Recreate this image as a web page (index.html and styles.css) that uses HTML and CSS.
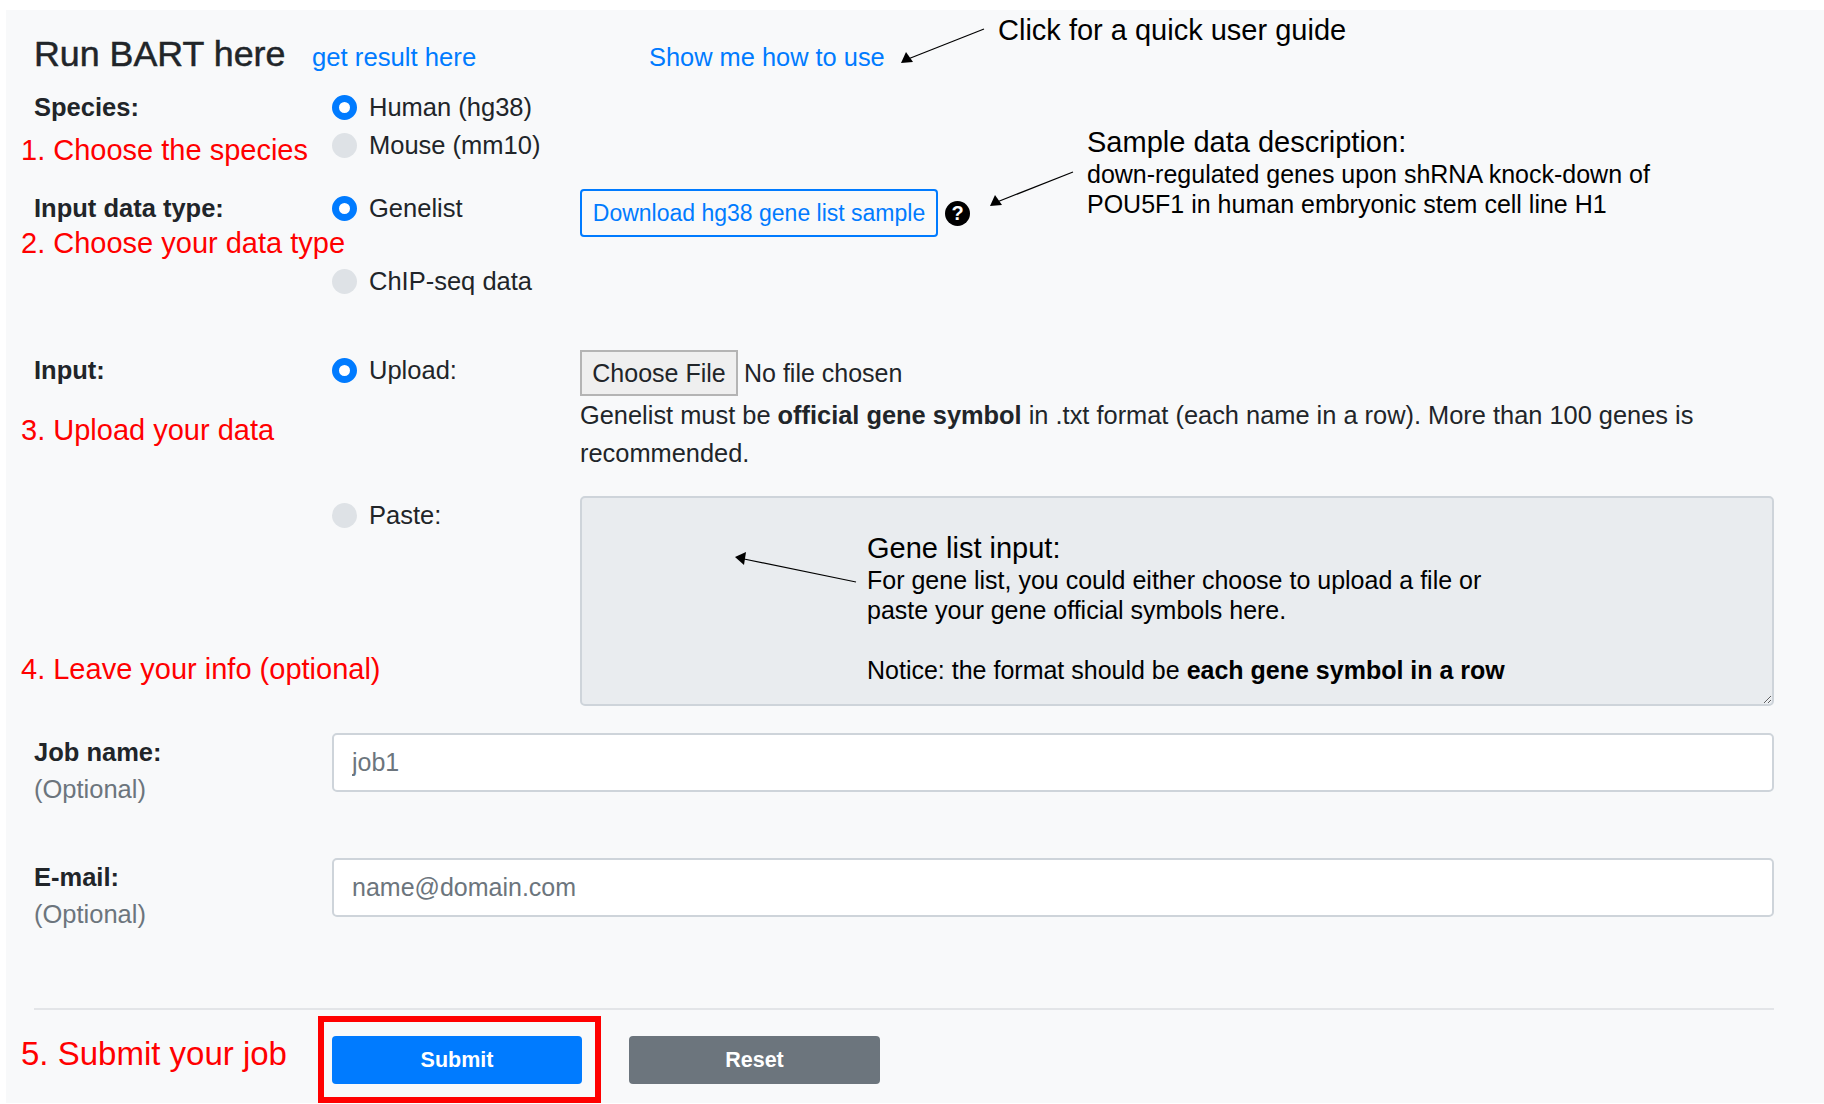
FILE: index.html
```html
<!DOCTYPE html>
<html lang="en">
<head>
    <meta charset="UTF-8">
    <meta name="viewport" content="width=device-width, initial-scale=1.0">
    <title>Run BART here</title>
    <link rel="stylesheet" href="styles.css">
</head>
<body>
    <div class="page">
        <form class="panel">

            <!-- Header -->
            <div class="header">
                <h3>Run BART here</h3>
                <a href="#" class="result-link">get result here</a>
                <a href="#" class="guide-link">Show me how to use</a>
            </div>

            <!-- Species -->
            <div class="row species-row">
                <div class="row-label"><b>Species:</b></div>
                <div class="row-options">
                    <label class="option"><input type="radio" name="species" checked>Human (hg38)</label>
                    <label class="option"><input type="radio" name="species">Mouse (mm10)</label>
                </div>
            </div>

            <!-- Data type -->
            <div class="row type-row">
                <div class="row-label"><b>Input data type:</b></div>
                <div class="row-options">
                    <label class="option"><input type="radio" name="datatype" checked>Genelist</label>
                    <label class="option chip-option"><input type="radio" name="datatype">ChIP-seq data</label>
                </div>
                <div class="row-extra sample-box">
                    <a href="#" class="btn-sample">Download hg38 gene list sample</a>
                    <span class="help-icon">?</span>
                </div>
            </div>

            <!-- Input -->
            <div class="row input-row">
                <div class="row-label"><b>Input:</b></div>
                <div class="row-options">
                    <label class="option"><input type="radio" name="source" checked>Upload:</label>
                </div>
                <div class="row-extra">
                    <div class="file-picker">
                        <button type="button" class="file-btn">Choose File</button>
                        <span>No file chosen</span>
                    </div>
                    <p class="file-hint">Genelist must be <b>official gene symbol</b> in .txt format (each name in a row). More than 100 genes is recommended.</p>
                </div>
            </div>
            <div class="row paste-row">
                <div class="row-label"></div>
                <div class="row-options">
                    <label class="option"><input type="radio" name="source">Paste:</label>
                </div>
                <div class="row-extra">
                    <textarea class="gene-text" disabled></textarea>
                </div>
            </div>

            <!-- Job info -->
            <div class="row job-row">
                <div class="row-label"><b>Job name:</b><div class="muted">(Optional)</div></div>
                <div class="row-field"><input type="text" class="text-field" placeholder="job1"></div>
            </div>
            <div class="row mail-row">
                <div class="row-label"><b>E-mail:</b><div class="muted">(Optional)</div></div>
                <div class="row-field"><input type="text" class="text-field" placeholder="name@domain.com"></div>
            </div>

            <hr>

            <!-- Buttons -->
            <div class="actions">
                <button type="button" class="btn btn-submit">Submit</button>
                <button type="button" class="btn btn-reset">Reset</button>
            </div>
        </form>

        <!-- Notes drawn on top of the form -->
        <div class="step step-1">1. Choose the species</div>
        <div class="step step-2">2. Choose your data type</div>
        <div class="step step-3">3. Upload your data</div>
        <div class="step step-4">4. Leave your info (optional)</div>
        <div class="step step-5">5. Submit your job</div>
        <div class="submit-frame"></div>

        <div class="note note-guide">Click for a quick user guide</div>
        <div class="note note-sample">
            <div class="note-title">Sample data description:</div>
            down-regulated genes upon shRNA knock-down of<br>
            POU5F1 in human embryonic stem cell line H1
        </div>
        <div class="note note-gene">
            <div class="note-title">Gene list input:</div>
            For gene list, you could either choose to upload a file or<br>
            paste your gene official symbols here.<br>
            <br>
            Notice: the format should be <b>each gene symbol in a row</b>
        </div>

        <svg class="arrows" width="1824" height="1104" viewBox="0 0 1824 1104">
            <g stroke="#000" stroke-width="1.2">
                <line x1="984" y1="29" x2="908" y2="59"/>
                <line x1="1073" y1="172" x2="997" y2="202"/>
                <line x1="856" y1="582" x2="744" y2="559"/>
            </g>
            <polygon points="901,63 906,52 913,62"/>
            <polygon points="990,206 995,195 1002,205"/>
            <polygon points="735,557 746,552 744,565"/>
        </svg>
    </div>
</body>
</html>
```

FILE: styles.css
```css
* {
    box-sizing: border-box;
}
body {
    margin: 0;
    background-color: #fff;
    font-family: "Liberation Sans", Arial, sans-serif;
    font-size: 25.5px;
    line-height: 37px;
    color: #212529;
}
.page {
    position: relative;
    width: 1824px;
    height: 1104px;
    overflow: hidden;
    padding: 10px 0 0 6px;
}
.panel {
    height: 1093px;
    padding: 0 50px 0 28px;
    background-color: #f8f9fa;
}

/* header */
.header {
    display: flex;
    align-items: baseline;
    height: 78px;
    padding-top: 23px;
}
.header h3 {
    margin: 0;
    width: 278px;
    font-size: 35.8px;
    font-weight: normal;
    line-height: 42px;
    -webkit-text-stroke: 0.5px #212529;
}
.header a {
    font-size: 25.7px;
    color: #007bff;
    text-decoration: none;
}
.result-link {
    width: 337px;
}
.header .guide-link {
    font-size: 25.4px;
}

/* rows */
.row {
    display: flex;
}
.row-label {
    flex: 0 0 298px;
    padding-top: 1px;
}
.row-options {
    flex: 0 0 248px;
}
.row-extra, .row-field {
    flex: 1;
}
.type-row {
    margin-top: 25px;
}
.input-row {
    margin-top: 51px;
}
.paste-row {
    margin-top: 24px;
}
.job-row {
    margin-top: 27px;
}
.mail-row {
    margin-top: 50px;
}
.muted {
    color: #6c757d;
}

/* radios */
.option {
    display: flex;
    align-items: center;
    height: 38px;
}
.option input {
    appearance: none;
    flex: none;
    width: 25px;
    height: 25px;
    margin: 0 12px 0 0;
    border-radius: 50%;
    background-color: #dee2e6;
}
.option input:checked {
    background-color: #fff;
    border: 7px solid #007bff;
}
.chip-option {
    margin-top: 35px;
}

/* sample download */
.sample-box {
    display: flex;
    align-items: center;
    height: 50px;
    margin-top: -1px;
}
.btn-sample {
    width: 358px;
    height: 48px;
    border: 2px solid #007bff;
    border-radius: 4px;
    font-size: 23px;
    line-height: 45px;
    text-align: center;
    color: #007bff;
    text-decoration: none;
}
.help-icon {
    width: 25px;
    height: 25px;
    margin-left: 7px;
    border-radius: 50%;
    background-color: #000;
    color: #fff;
    font-size: 20px;
    font-weight: bold;
    line-height: 25px;
    text-align: center;
}

/* file input */
.file-picker {
    display: flex;
    align-items: center;
    gap: 6px;
    margin-top: -1px;
    font-size: 25px;
}
.file-btn {
    width: 158px;
    height: 46px;
    padding: 0;
    border: 2px solid #b4b4b4;
    background-color: #efefef;
    font-family: inherit;
    font-size: 25px;
    color: #212529;
}
.file-hint {
    margin: 0;
    font-size: 25.4px;
    line-height: 38px;
}
.gene-text {
    display: block;
    width: 100%;
    height: 210px;
    border: 2px solid #ced4da;
    border-radius: 5px;
    background-color: #e9ecef;
}

/* text inputs */
.text-field {
    display: block;
    width: 100%;
    height: 59px;
    padding: 0 18px;
    border: 2px solid #ced4da;
    border-radius: 5px;
    background-color: #fff;
    font-family: inherit;
    font-size: 25px;
}
.text-field::placeholder {
    color: #6c757d;
    opacity: 1;
}

hr {
    margin: 75px 0 0;
    border: 0;
    border-top: 2px solid #e3e5e8;
}
.actions {
    display: flex;
    gap: 47px;
    margin: 26px 0 0 298px;
}
.btn {
    width: 250px;
    height: 48px;
    border: 0;
    border-radius: 4px;
    color: #fff;
    font-family: inherit;
    font-size: 21.5px;
    font-weight: bold;
}
.btn-submit {
    background-color: #007bff;
}
.btn-reset {
    width: 251px;
    background-color: #6c757d;
}

/* overlays */
.step, .note {
    position: absolute;
    white-space: nowrap;
}
.step {
    left: 21px;
    color: #f00;
    font-size: 29px;
    line-height: 34px;
}
.step-1 { top: 133px; }
.step-2 { top: 226px; }
.step-3 { top: 413px; }
.step-4 { top: 652px; }
.step-5 {
    top: 1035px;
    font-size: 33px;
    line-height: 38px;
}
.submit-frame {
    position: absolute;
    left: 318px;
    top: 1016px;
    width: 283px;
    height: 87px;
    border: 6px solid #f00;
}
.note {
    color: #000;
    font-size: 25px;
    line-height: 30px;
}
.note-title {
    font-size: 29px;
    line-height: 34px;
}
.note-guide {
    left: 998px;
    top: 13px;
    font-size: 29px;
    line-height: 34px;
}
.note-sample {
    left: 1087px;
    top: 125px;
}
.note-gene {
    left: 867px;
    top: 531px;
}
.arrows {
    position: absolute;
    left: 0;
    top: 0;
    pointer-events: none;
}
```
